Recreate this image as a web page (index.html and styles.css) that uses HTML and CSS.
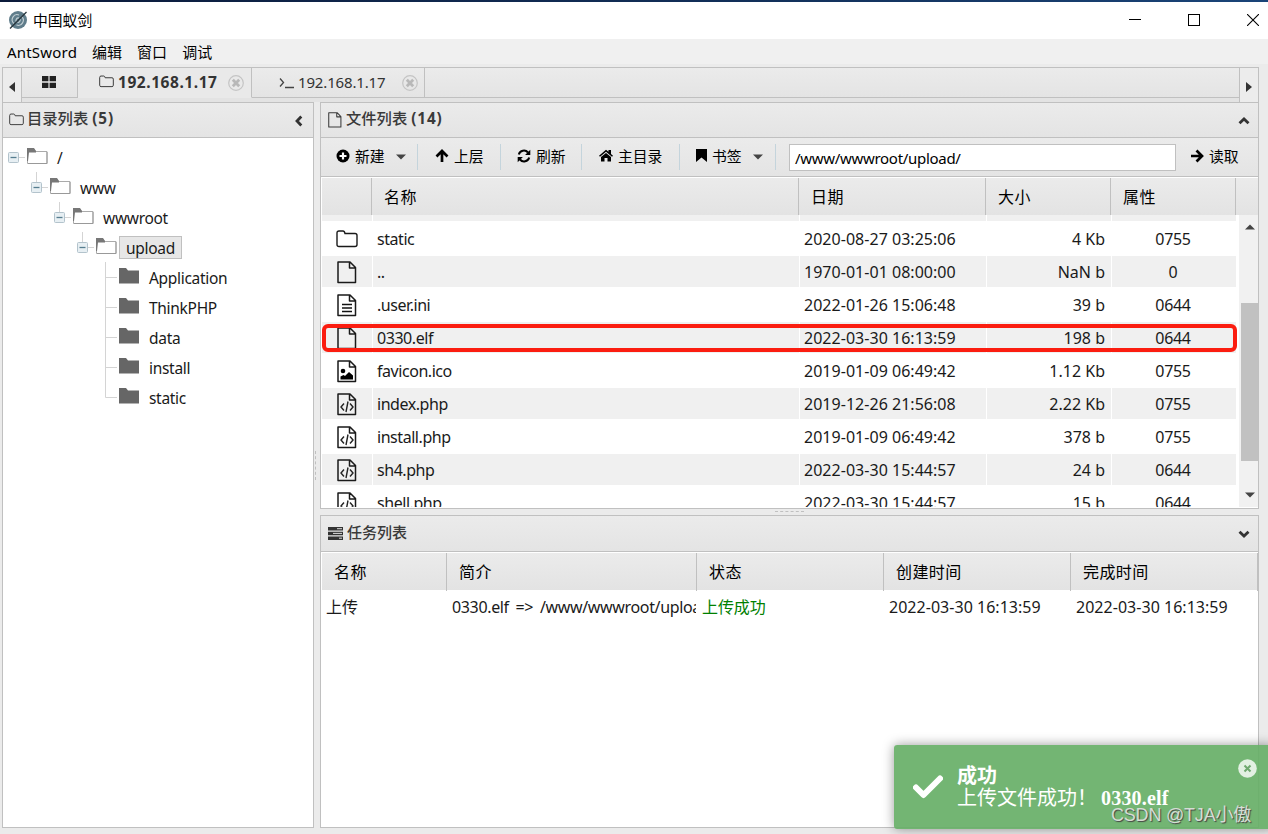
FILE: index.html
```html
<!DOCTYPE html>
<html lang="zh-CN">
<head>
  <meta charset="UTF-8">
  <title>中国蚁剑</title>
  <link rel="stylesheet" href="styles.css">
</head>
<body>
  <svg class="sprite" xmlns="http://www.w3.org/2000/svg">
    <symbol id="i-folder-o" viewBox="0 0 22 18"><path d="M1 14.500V3Q1 1 3 1H7Q8.500 1 9 3.500H19Q21 3.500 21 5.500V14.500Q21 16.500 19 16.500H3Q1 16.500 1 14.500Z" fill="none" stroke="currentColor" stroke-width="1.400"/></symbol>
    <symbol id="i-file" viewBox="0 0 20 23"><path d="M1 1H13L18.500 6.500V21.500H1Z M12.500 1V7H18.500" fill="none" stroke="currentColor" stroke-width="1.500" stroke-linejoin="round"/></symbol>
    <symbol id="i-text" viewBox="0 0 20 23"><use href="#i-file"/><path d="M5 10.500H15M5 14H15M5 17.500H15" stroke="#111" stroke-width="1.300"/></symbol>
    <symbol id="i-image" viewBox="0 0 20 23"><use href="#i-file"/><circle cx="6" cy="11" r="2.300"/><path d="M3.500 19.500V16.500L6.500 15L8 16L12 12L16 15.500V19.500Z"/></symbol>
    <symbol id="i-code" viewBox="0 0 20 23"><use href="#i-file"/><path d="M7 10.500L4 14L7 17.500M13 10.500L16 14L13 17.500M11 8.500L9 19" fill="none" stroke="#222" stroke-width="1.400"/></symbol>
    <symbol id="i-open" viewBox="0 0 21 17"><path d="M.5 15.500V1H7L8.500 3.500H20V15.500Z" fill="#fff" stroke="#aaa"/><path d="M0 0H7L9 3V4.500H2L1 13H0Z" fill="#777"/><path d="M1 15.500H20V4" fill="none" stroke="#999"/></symbol>
    <symbol id="i-closed" viewBox="0 0 21 17"><path d="M0 0H7L9 2.500H20V15.500H0Z" fill="#666"/></symbol>
    <symbol id="i-minus" viewBox="0 0 23 30"><path d="M16 15.500H22" stroke="#d4d4d4"/><rect x="5.500" y="10.500" width="10" height="10" rx="1" fill="#e7eff3" stroke="#b3c3cc"/><path d="M7.500 15.500H13.500" stroke="#567d90" stroke-width="1.300"/></symbol>
    <symbol id="i-stem" viewBox="0 0 23 30"><path d="M10.500 0V10" stroke="#d4d4d4"/><use href="#i-minus"/></symbol>
    <symbol id="i-tee" viewBox="0 0 23 30"><path d="M10.500 0V30M10.500 15.500H22" stroke="#d4d4d4" fill="none"/></symbol>
    <symbol id="i-ell" viewBox="0 0 23 30"><path d="M10.500 0V15.500H22" stroke="#d4d4d4" fill="none"/></symbol>
    <symbol id="i-close" viewBox="0 0 16 16"><circle cx="8" cy="8" r="7.300" fill="none" stroke="#c4c4c4" stroke-width="1.200"/><path d="M4.800 4.800L11.200 11.200M11.200 4.800L4.800 11.200" stroke="#b8b8b8" stroke-width="2.800"/></symbol>
    <symbol id="i-caret" viewBox="0 0 10 6"><path d="M0 .5H10L5 5.500Z" fill="#444"/></symbol>
    <symbol id="i-chevron" viewBox="0 0 12 8"><path d="M1.500 6.300L6 2L10.500 6.300" fill="none" stroke="#333" stroke-width="2.800"/></symbol>
    <symbol id="i-arrow" viewBox="0 0 14 14"><path d="M1 7H12M6.500 1.500L12 7L6.500 12.500" fill="none" stroke="#000" stroke-width="2.700"/></symbol>
  </svg>

  <div class="desktop"></div>
  <header class="titlebar">
    <svg class="app-logo" width="20" height="20" viewBox="0 0 20 20"><circle cx="10" cy="10" r="9" fill="#607d8b"/><path d="M6 13.500A5 5 0 0 1 11 5M13.500 6.500A5 5 0 0 1 8.500 15M8.500 12A2.500 2.500 0 0 1 11 8M12 9A2.500 2.500 0 0 1 9.500 12.500" fill="none" stroke="#c5d1d6" stroke-width="1.100"/><path d="M2 18.500L18.500 2" stroke="#26343c" stroke-width="1.300"/></svg>
    <span class="app-title">中国蚁剑</span>
    <div class="window-buttons">
      <svg width="12" height="12"><path d="M0 5.500H12" stroke="#000"/></svg>
      <svg width="12" height="12"><rect x=".5" y=".5" width="11" height="11" fill="none" stroke="#000"/></svg>
      <svg width="12" height="12"><path d="M0 0L12 12M12 0L0 12" stroke="#000" stroke-width="1.100"/></svg>
    </div>
  </header>
  <nav class="menubar">
    <span class="menu-name">AntSword</span><span>编辑</span><span>窗口</span><span>调试</span>
  </nav>

  <main class="workspace">
    <div class="tabbar">
      <div class="tab-arrow"><svg width="6" height="10"><path d="M6 0V10L0 5Z" fill="#333"/></svg></div>
      <div class="tabs">
        <div class="tab tab-home"><svg width="14" height="12"><path d="M0 0H6.400V5.300H0ZM7.600 0H14V5.300H7.600ZM0 6.700H6.400V12H0ZM7.600 6.700H14V12H7.600Z" fill="#222"/></svg></div>
        <div class="tab tab-active"><svg class="tab-folder" width="15" height="13"><use href="#i-folder-o"/></svg><b>192.168.1.17</b><svg width="16" height="16"><use href="#i-close"/></svg></div>
        <div class="tab tab-shell"><svg width="15" height="12"><path d="M1 1.500L4.500 5.500L1 9.500M6 10.500H15" fill="none" stroke="#444" stroke-width="1.300"/></svg><span>192.168.1.17</span><svg width="16" height="16"><use href="#i-close"/></svg></div>
      </div>
      <div class="tab-arrow tab-next"><svg width="6" height="10"><path d="M0 0V10L6 5Z" fill="#333"/></svg></div>
    </div>

    <div class="columns">
      <section class="panel sidebar">
        <div class="panel-head">
          <svg width="15" height="13"><use href="#i-folder-o"/></svg>
          <h2>目录列表 <span>(5)</span></h2>
          <svg class="fold fold-left" width="12" height="8"><use href="#i-chevron"/></svg>
        </div>
        <div class="tree">
          <div class="node"><svg class="branch"><use href="#i-minus"/></svg><svg class="dir"><use href="#i-open"/></svg><span class="label">/</span></div>
          <div class="node level-1"><svg class="branch"><use href="#i-stem"/></svg><svg class="dir"><use href="#i-open"/></svg><span class="label">www</span></div>
          <div class="node level-2"><svg class="branch"><use href="#i-stem"/></svg><svg class="dir"><use href="#i-open"/></svg><span class="label">wwwroot</span></div>
          <div class="node level-3"><svg class="branch"><use href="#i-stem"/></svg><svg class="dir"><use href="#i-open"/></svg><span class="label selected">upload</span></div>
          <div class="node level-4"><svg class="branch"><use href="#i-tee"/></svg><svg class="dir"><use href="#i-closed"/></svg><span class="label">Application</span></div>
          <div class="node level-4"><svg class="branch"><use href="#i-tee"/></svg><svg class="dir"><use href="#i-closed"/></svg><span class="label">ThinkPHP</span></div>
          <div class="node level-4"><svg class="branch"><use href="#i-tee"/></svg><svg class="dir"><use href="#i-closed"/></svg><span class="label">data</span></div>
          <div class="node level-4"><svg class="branch"><use href="#i-tee"/></svg><svg class="dir"><use href="#i-closed"/></svg><span class="label">install</span></div>
          <div class="node level-4"><svg class="branch"><use href="#i-ell"/></svg><svg class="dir"><use href="#i-closed"/></svg><span class="label">static</span></div>
        </div>
      </section>

      <div class="splitter"><i></i></div>

      <div class="content">
        <section class="panel files">
          <div class="panel-head">
            <svg width="14" height="16"><use href="#i-file"/></svg>
            <h2>文件列表 <span>(14)</span></h2>
            <svg class="fold" width="12" height="8"><use href="#i-chevron"/></svg>
          </div>
          <div class="toolbar">
            <div class="tool tool-new"><svg width="14" height="14"><circle cx="7" cy="7" r="6.500"/><path d="M3.500 7H10.500M7 3.500V10.500" stroke="#fff" stroke-width="2.200"/></svg>新建<svg class="caret" width="10" height="6"><use href="#i-caret"/></svg></div>
            <div class="tool tool-up"><svg class="up" width="14" height="14"><use href="#i-arrow"/></svg>上层</div>
            <div class="tool tool-refresh"><svg width="14" height="14" viewBox="0 0 14 14"><path d="M1.800 5.500A5.300 5.300 0 0 1 11 3.500M12.200 8.500A5.300 5.300 0 0 1 3 10.500" fill="none" stroke="#000" stroke-width="2"/><path d="M13.300 .8V6H8.100ZM.7 13.200V8H5.900Z"/></svg>刷新</div>
            <div class="tool tool-home-dir"><svg width="14" height="13" viewBox="0 0 14 13"><path d="M0 6.700L7 .7L9.500 2.800V1H12V5L14 6.700L13 7.700L7 2.700L1 7.700Z"/><path d="M2 8L7 4L12 8V12.500H8.500V9H5.500V12.500H2Z"/></svg>主目录</div>
            <div class="tool tool-mark"><svg width="11" height="13"><path d="M0 0H11V13L5.500 8.500L0 13Z"/></svg>书签<svg class="caret" width="10" height="6"><use href="#i-caret"/></svg></div>
            <div class="path">/www/wwwroot/upload/</div>
            <div class="read"><svg width="14" height="14"><use href="#i-arrow"/></svg>读取</div>
          </div>
          <div class="grid-head file-cols">
            <div></div><div>名称</div><div>日期</div><div>大小</div><div>属性</div>
          </div>
          <div class="grid-scroll">
            <div class="rows">
              <div class="row odd file-cols tail"><div></div><div></div><div></div><div></div><div></div></div>
              <div class="row file-cols"><div><svg class="big-folder"><use href="#i-folder-o"/></svg></div><div>static</div><div>2020-08-27 03:25:06</div><div>4 Kb</div><div>0755</div></div>
              <div class="row odd file-cols"><div><svg><use href="#i-file"/></svg></div><div>..</div><div>1970-01-01 08:00:00</div><div>NaN b</div><div>0</div></div>
              <div class="row file-cols"><div><svg><use href="#i-text"/></svg></div><div>.user.ini</div><div>2022-01-26 15:06:48</div><div>39 b</div><div>0644</div></div>
              <div class="row odd file-cols marked"><div><svg><use href="#i-file"/></svg></div><div>0330.elf</div><div>2022-03-30 16:13:59</div><div>198 b</div><div>0644</div></div>
              <div class="row file-cols"><div><svg><use href="#i-image"/></svg></div><div>favicon.ico</div><div>2019-01-09 06:49:42</div><div>1.12 Kb</div><div>0755</div></div>
              <div class="row odd file-cols"><div><svg><use href="#i-code"/></svg></div><div>index.php</div><div>2019-12-26 21:56:08</div><div>2.22 Kb</div><div>0755</div></div>
              <div class="row file-cols"><div><svg><use href="#i-code"/></svg></div><div>install.php</div><div>2019-01-09 06:49:42</div><div>378 b</div><div>0755</div></div>
              <div class="row odd file-cols"><div><svg><use href="#i-code"/></svg></div><div>sh4.php</div><div>2022-03-30 15:44:57</div><div>24 b</div><div>0644</div></div>
              <div class="row file-cols"><div><svg><use href="#i-code"/></svg></div><div>shell.php</div><div>2022-03-30 15:44:57</div><div>15 b</div><div>0644</div></div>
            </div>
            <div class="scrollbar">
              <svg class="flip" width="10" height="6"><use href="#i-caret"/></svg>
              <div class="thumb"></div>
              <svg width="10" height="6"><use href="#i-caret"/></svg>
            </div>
          </div>
        </section>

        <div class="splitter-h"><i></i></div>

        <section class="panel tasks">
          <div class="panel-head">
            <svg width="15" height="13"><path d="M0 0H15V3.500H0ZM0 4.700H15V8.200H0ZM0 9.400H15V13H0Z" fill="#333"/><path d="M9 1.700H14M5 6.400H14M11 11.200H14" stroke="#ddd"/></svg>
            <h2>任务列表</h2>
            <svg class="fold fold-down" width="12" height="8"><use href="#i-chevron"/></svg>
          </div>
          <div class="grid-head task-cols">
            <div>名称</div><div>简介</div><div>状态</div><div>创建时间</div><div>完成时间</div>
          </div>
          <div class="row task-cols">
            <div>上传</div><div class="intro">0330.elf =&gt; /www/wwwroot/upload/</div><div class="done">上传成功</div><div class="time">2022-03-30 16:13:59</div><div class="time">2022-03-30 16:13:59</div>
          </div>
        </section>
      </div>
    </div>
  </main>

  <div class="toast">
    <svg class="check" width="30" height="24"><path d="M3 12.500L10.500 20L27 3.500" fill="none" stroke="#fff" stroke-width="6" stroke-linecap="round" stroke-linejoin="round"/></svg>
    <div class="toast-text"><b>成功</b><p>上传文件成功！<span>0330.elf</span></p></div>
    <svg class="toast-close" width="19" height="19"><circle cx="9.500" cy="9.500" r="9.300" fill="#e3f0e3"/><path d="M6.500 6.500L12.500 12.500M12.500 6.500L6.500 12.500" stroke="#70a870" stroke-width="2"/></svg>
  </div>
  <div class="watermark">CSDN @TJA小傲</div>
</body>
</html>
```
FILE: styles.css
```css
* {
  box-sizing: border-box;
}
body {
  margin: 0;
  width: 1268px;
  height: 834px;
  overflow: hidden;
  position: relative;
  display: flex;
  flex-direction: column;
  background: #ebebeb;
  color: #1a1a1a;
  font-family: "Noto Sans", "Noto Sans CJK SC", sans-serif;
  font-size: 15px;
  line-height: 20px;
}
svg {
  display: block;
  flex: none;
}
.sprite {
  position: absolute;
  width: 0;
  height: 0;
}

/* window frame */
.desktop {
  height: 2px;
  flex: none;
  background: linear-gradient(to right, #0b1a3a, #12305a 60%, #1a4478);
}
.titlebar {
  height: 37px;
  flex: none;
  display: flex;
  align-items: center;
  background: #fff;
  padding: 0 9px 1px 8px;
}
.app-title {
  margin-left: 5px;
  font-size: 14.8px;
  color: #000;
}
.window-buttons {
  margin-left: auto;
  display: flex;
  gap: 47px;
}
.menubar {
  height: 25px;
  flex: none;
  display: flex;
  align-items: center;
  gap: 15px;
  padding: 0 7px 0;
  background: #f0f0f0;
  color: #000;
}
.menu-name {
  letter-spacing: 0.2px;
}
.workspace {
  height: 761px;
  margin: 3px 9px 0 2px;
  display: flex;
  flex-direction: column;
}

/* tabs */
.tabbar {
  height: 35px;
  flex: none;
  display: flex;
  border: 1px solid #c0c0c0;
  border-bottom: 0;
  background: #e3e3e3;
}
.tab-arrow {
  width: 19px;
  display: flex;
  align-items: center;
  justify-content: center;
  padding-top: 3px;
  border-right: 1px solid #c0c0c0;
  background: #ececec;
}
.tab-next {
  border-right: 0;
  border-left: 1px solid #c0c0c0;
}
.tabs {
  flex: 1;
  height: 30px;
  display: flex;
  border-bottom: 1px solid #c0c0c0;
  background: linear-gradient(#ebebeb, #e4e4e4);
}
.tab {
  height: 30px;
  display: flex;
  align-items: center;
  border-right: 1px solid #c0c0c0;
  border-bottom: 1px solid #c0c0c0;
  color: #333;
}
.tab-home {
  width: 56px;
  padding-left: 20px;
  padding-bottom: 1px;
}
.tab-active {
  width: 174px;
  padding-left: 21px;
  background: #e9e9e9;
  border-bottom-color: #e9e9e9;
}
.tab-folder {
  margin-top: -2px;
}
.tab-active b {
  width: 110px;
  margin-left: 4px;
  margin-top: -1px;
  font-size: 15.5px;
  letter-spacing: 0.55px;
}
.tab-shell {
  width: 173px;
  padding-left: 27px;
}
.tab-shell span {
  width: 104px;
  margin-left: 4px;
  margin-top: -2px;
  letter-spacing: -0.15px;
}

/* panels */
.columns {
  flex: 1;
  display: flex;
  min-height: 0;
}
.panel {
  border: 1px solid #c0c0c0;
  background: #fff;
}
.sidebar {
  width: 312px;
}
.content {
  width: 939px;
  display: flex;
  flex-direction: column;
}
.files {
  height: 407px;
}
.tasks {
  height: 313px;
}
.panel-head {
  height: 35px;
  display: flex;
  align-items: center;
  padding: 0 8px 1px 6px;
  border-bottom: 1px solid #c0c0c0;
  background: linear-gradient(#ebebeb, #e4e4e4);
  color: #3a3a3a;
}
.panel-head h2 {
  margin: -3px 0 0 4px;
  font-size: 15.3px;
  font-weight: 500;
}
.sidebar h2 {
  margin-left: 3px;
}
.panel-head h2 span {
  letter-spacing: 0.9px;
  font-weight: 700;
}
.files .panel-head,
.tasks .panel-head {
  padding-left: 7px;
}
.tasks .panel-head {
  height: 36px;
}
.tasks h2 {
  margin-top: -2px;
  font-size: 15px;
}
.fold {
  margin-left: auto;
  margin-top: 2px;
}
.sidebar .fold {
  margin-top: 3px;
}
.fold-left {
  transform: rotate(-90deg);
}
.fold-down {
  transform: rotate(180deg);
}
.splitter {
  width: 6px;
  display: flex;
  align-items: center;
  justify-content: center;
}
.splitter i {
  height: 29px;
  margin-right: 3px;
  border-left: 1px dashed #c0c0c0;
}
.splitter-h {
  height: 6px;
  display: flex;
  align-items: center;
  justify-content: center;
}
.splitter-h i {
  width: 29px;
  margin-bottom: 1px;
  border-top: 1px dashed #c0c0c0;
}

/* directory tree */
.tree {
  padding-top: 4px;
  font-size: 15.5px;
  letter-spacing: -0.3px;
}
.node {
  height: 30px;
  display: flex;
  align-items: center;
}
.branch {
  width: 23px;
  height: 30px;
}
.dir {
  width: 21px;
  height: 17px;
  margin: -1px 2px 0 1px;
}
.label {
  height: 23px;
  line-height: 22px;
  margin-top: 1px;
  padding: 0 6px;
  border: 1px solid transparent;
}
.selected {
  border-color: #c0c0c0;
  background: #e7e7e7;
}
.level-1 {
  padding-left: 23px;
}
.level-2 {
  padding-left: 46px;
}
.level-3 {
  padding-left: 69px;
}
.level-4 {
  padding-left: 92px;
}

/* toolbar */
.toolbar {
  height: 39px;
  display: flex;
  align-items: center;
  border-bottom: 1px solid #c0c0c0;
  background: linear-gradient(#ebebeb, #e4e4e4);
  color: #000;
  font-size: 14.8px;
}
.tool {
  height: 26px;
  display: flex;
  align-items: center;
  gap: 5px;
  padding-left: 15px;
  padding-bottom: 3px;
  border-right: 1px solid #c4d4dc;
}
.tool .caret {
  margin-left: 6px;
  margin-top: 2px;
}
.tool-new {
  width: 97px;
}
.tool-up {
  width: 83px;
  padding-left: 17px;
}
.tool-refresh {
  width: 81px;
  padding-left: 16px;
}
.tool-home-dir {
  width: 98px;
  padding-left: 17px;
}
.tool-mark {
  width: 96px;
  padding-left: 16px;
}
.up {
  transform: rotate(-90deg);
}
.path {
  width: 387px;
  height: 27px;
  margin: 1px 15px 0 13px;
  padding: 0 5px;
  border: 1px solid #c0c0c0;
  background: #fff;
  line-height: 26px;
  font-size: 15px;
  letter-spacing: -0.3px;
}
.read {
  display: flex;
  align-items: center;
  gap: 5px;
  margin-left: -1px;
  padding-bottom: 3px;
}

/* grids */
.grid-head {
  height: 37px;
  margin-left: 1px;
  margin-top: 1px;
  background: linear-gradient(#ebebeb, #e3e3e3);
  font-size: 16px;
  letter-spacing: 0.4px;
  line-height: 38px;
  color: #000;
}
.grid-head div {
  padding-left: 12px;
  border-right: 1px solid #c0c0c0;
}
.file-cols {
  display: grid;
  grid-template-columns: 50px 427px 187px 125px 125px;
}
.task-cols {
  display: grid;
  grid-template-columns: 125px 250px 187px 187px 187px;
}
.grid-scroll {
  height: 292px;
  display: flex;
  justify-content: space-between;
  overflow: hidden;
}
.rows {
  width: 915px;
  padding-left: 1px;
}
.row {
  height: 33px;
  font-size: 16px;
  letter-spacing: -0.45px;
  line-height: 32px;
}
.row div {
  height: 31px;
  padding: 0 6px 0 4px;
  border-left: 1px solid #fff;
  overflow: hidden;
  white-space: nowrap;
}
.row div:first-child {
  border-left: 0;
}
.odd div {
  background: #f0f0f0;
}
.row.file-cols div:nth-child(3),
.row .time {
  letter-spacing: 0.03px;
}
.row.file-cols div:nth-child(4) {
  text-align: right;
  letter-spacing: 0;
}
.row.file-cols div:nth-child(5) {
  text-align: center;
  letter-spacing: -0.3px;
}
.row.file-cols div:first-child {
  padding: 5px 0 0 15px;
}
.row svg {
  width: 20px;
  height: 23px;
}
.row .big-folder {
  width: 22px;
  height: 18px;
  margin: 2px 0 0 -1px;
}
.tail {
  height: 8px;
}
.row.tail div {
  height: 6px;
  padding: 0;
}
.marked {
  position: relative;
}
.marked::after {
  content: "";
  position: absolute;
  box-sizing: border-box;
  left: 0;
  right: -1px;
  top: 2px;
  height: 28px;
  border: 4px solid #fb1d10;
  border-radius: 6px;
}
.scrollbar {
  width: 19px;
  display: flex;
  flex-direction: column;
  align-items: center;
  padding: 9px 0 9px 2px;
  background: #f1f1f1;
}
.scrollbar .thumb {
  width: 17px;
  height: 158px;
  margin: 73px 0 31px;
  background: #c1c1c1;
}
.flip {
  transform: rotate(180deg);
}
.tasks .row {
  line-height: 34px;
  margin-left: 1px;
}
.row .intro {
  margin-right: 1px;
  letter-spacing: -0.35px;
  word-spacing: 3px;
}
.row .done {
  color: #008000;
}
.tasks .row div:first-child,
.row .done {
  letter-spacing: -0.1px;
}

/* toast */
.toast {
  position: absolute;
  left: 894px;
  top: 745px;
  width: 380px;
  height: 84px;
  display: flex;
  padding: 20px 0 0 19px;
  border-radius: 3px;
  background: rgba(103, 175, 103, 0.92);
  box-shadow: 0 0 12px rgba(0, 0, 0, 0.4);
  color: #fff;
  font-family: "Liberation Serif", "Noto Sans CJK SC", serif;
  font-size: 20px;
  line-height: 22px;
}
.check {
  margin: 10px 14px 0 0;
}
.toast-text p {
  margin: 0;
  white-space: nowrap;
}
.toast-text span {
  font-weight: 700;
  margin-left: 4px;
  letter-spacing: 0.2px;
}
.toast-close {
  position: absolute;
  left: 344px;
  top: 14px;
}
.watermark {
  position: absolute;
  left: 1111px;
  top: 803px;
  font-family: "Liberation Sans", "Noto Sans CJK SC", sans-serif;
  font-size: 18px;
  letter-spacing: -0.2px;
  line-height: 24px;
  color: #d5ddd5;
  text-shadow: 1px 1px 1px #444;
  white-space: nowrap;
}
```
